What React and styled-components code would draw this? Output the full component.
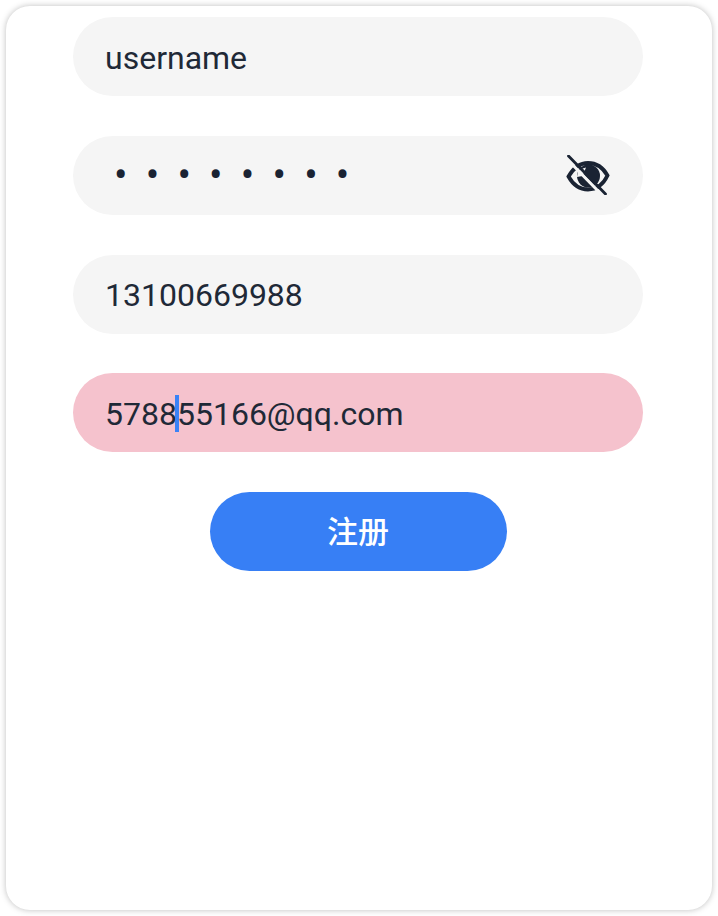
import styled, { createGlobalStyle } from "styled-components";

const GlobalStyle = createGlobalStyle`
  html, body {
    margin: 0;
    background: #ffffff;
  }
`;

const Page = styled.div`
  padding: 6px;
  box-sizing: border-box;
  width: 718px;
  height: 916px;
  font-family: "Roboto", "Noto Sans CJK SC", sans-serif;
`;

const Card = styled.div`
  box-sizing: border-box;
  height: 904px;
  padding: 11px 69px 0 67px;
  display: flex;
  flex-direction: column;
  gap: 39.75px;
  background: #ffffff;
  border-radius: 24px;
  box-shadow: 0 0 6px rgba(0, 0, 0, 0.26);
`;

const Field = styled.div`
  box-sizing: border-box;
  height: 79px;
  padding: 0 33px 0 32px;
  display: flex;
  align-items: center;
  justify-content: space-between;
  border-radius: 40px;
  background: ${(props) => (props.$error ? "#f5c2cd" : "#f5f5f5")};
  color: #1f2937;
  font-size: 32px;
`;

const FieldText = styled.span`
  position: relative;
  top: 1px;
`;

const Dots = styled.span`
  font-size: 40px;
  letter-spacing: 18.2px;
  color: #1a2333;
  margin-left: 9px;
`;

const Caret = styled.span`
  display: inline-block;
  width: 4px;
  height: 37px;
  margin: 0 -2px;
  vertical-align: -7px;
  background: #3b82f6;
`;

const Submit = styled.button`
  align-self: center;
  width: 297px;
  height: 79px;
  padding: 0 0 4px;
  border: none;
  border-radius: 40px;
  background: #377ff5;
  color: #ffffff;
  font-family: inherit;
  font-size: 31px;
  font-weight: 500;
`;

function EyeOffIcon() {
  return (
    <svg width="44" height="40" viewBox="0 0 44 40" fill="none">
      <path
        d="M2.500 21.500C8 12 15 8 22 8C30 8 37 12.500 41.500 20.500C37 30 30 34.500 22 34.500C14 34.500 7.500 30.500 2.500 21.500Z"
        stroke="#1a2333"
        strokeWidth="3.8"
      />
      <circle cx="22.500" cy="21" r="11.500" fill="#1a2333" />
      <path d="M11 22L12 15L20 12.500L16.500 21Z" fill="#f5f5f5" />
      <path d="M0.500 3.500L37 41" stroke="#f5f5f5" strokeWidth="3" />
      <path d="M2.500 1L39.500 39" stroke="#1a2333" strokeWidth="2.800" strokeLinecap="round" />
    </svg>
  );
}

export default function App() {
  return (
    <Page>
      <GlobalStyle />
      <Card>
        <Field>
          <FieldText>username</FieldText>
        </Field>
        <Field>
          <Dots>••••••••</Dots>
          <EyeOffIcon />
        </Field>
        <Field>
          <FieldText>13100669988</FieldText>
        </Field>
        <Field $error>
          <FieldText>
            5788
            <Caret />
            55166@qq.com
          </FieldText>
        </Field>
        <Submit>注册</Submit>
      </Card>
    </Page>
  );
}
